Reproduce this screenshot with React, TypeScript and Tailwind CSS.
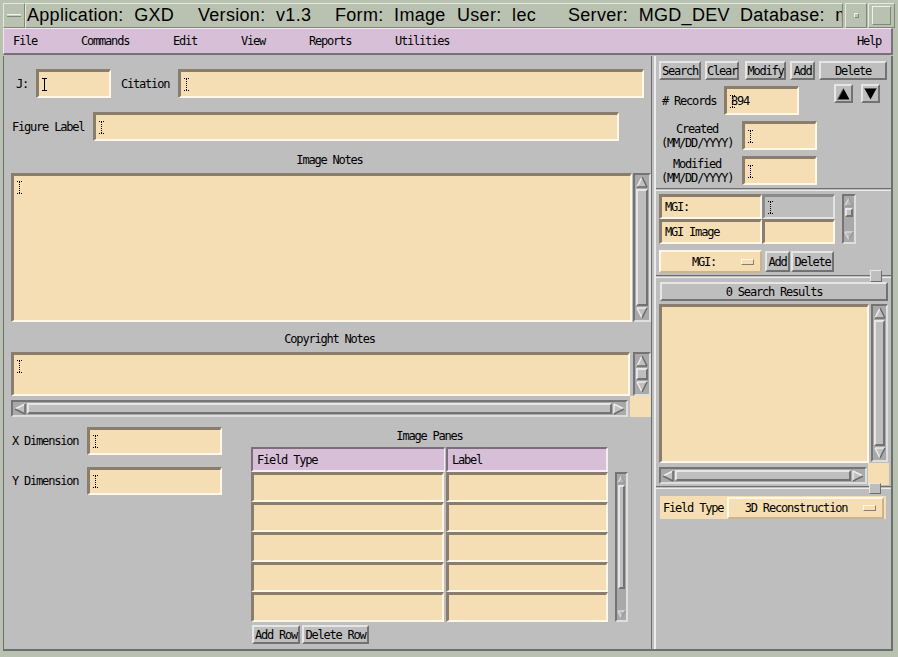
import React from "react";

const mono = "font-['DejaVu_Sans_Mono',monospace] text-[12px] tracking-[-1.2px] leading-[14px] text-black whitespace-pre";
const sunken =
  "bg-[#f5deb3] border-t-[3px] border-l-[3px] border-b-2 border-r-2 border-t-[#8b7d6b] border-l-[#8b7d6b] border-b-[#fff8e9] border-r-[#fff8e9]";
const raised =
  "bg-[#bebebe] border-2 border-t-[#e6e6e6] border-l-[#e6e6e6] border-b-[#727272] border-r-[#727272]";
const trough =
  "bg-[#a9a9a9] border-2 border-t-[#747474] border-l-[#747474] border-b-[#dedede] border-r-[#dedede]";

function IBeam({ solid = false }: { solid?: boolean }) {
  return (
    <svg width="5" height="13" viewBox="0 0 5 13" className="shrink-0">
      <path d="M0 0.5h5M0 12.5h5" stroke="#000" strokeWidth="1" strokeDasharray={solid ? undefined : "1 1"} />
      <path d="M2.5 1v11" stroke="#000" strokeWidth="1" strokeDasharray={solid ? undefined : "1 1"} />
    </svg>
  );
}

function Input({ className = "", cursor = true, solid = false, top = false, children }: {
  className?: string;
  cursor?: boolean;
  solid?: boolean;
  top?: boolean;
  children?: React.ReactNode;
}) {
  return (
    <div className={`${sunken} flex ${top ? "items-start pt-[5px]" : "items-center"} pl-[3px] shrink-0 ${className}`}>
      {cursor && <IBeam solid={solid} />}
      {children}
    </div>
  );
}

function Btn({ className = "", children }: { className?: string; children?: React.ReactNode }) {
  return <div className={`${raised} ${mono} flex items-center justify-center shrink-0 ${className}`}>{children}</div>;
}

// beveled motif arrow
function Tri({ dir, w, h, dim = false }: { dir: "up" | "down" | "left" | "right"; w: number; h: number; dim?: boolean }) {
  const lt = dim ? "#d8d8d8" : "#ececec";
  const dk = dim ? "#9a9a9a" : "#6a6a6a";
  const fill = dim ? "#b4b4b4" : "#c0c0c0";
  let pts: number[][] = [];
  if (dir === "up") pts = [[w / 2, 1], [1, h - 1], [w - 1, h - 1]];
  if (dir === "down") pts = [[1, 1], [w - 1, 1], [w / 2, h - 1]];
  if (dir === "left") pts = [[1, h / 2], [w - 1, 1], [w - 1, h - 1]];
  if (dir === "right") pts = [[1, 1], [w - 1, h / 2], [1, h - 1]];
  const p = pts.map((q) => q.join(",")).join(" ");
  const [a, b, c] = pts;
  const line = (p1: number[], p2: number[], col: string, k: string) => (
    <line key={k} x1={p1[0]} y1={p1[1]} x2={p2[0]} y2={p2[1]} stroke={col} strokeWidth="1.5" />
  );
  let lines: React.ReactNode[] = [];
  if (dir === "up") lines = [line(a, b, lt, "1"), line(b, c, dk, "2"), line(c, a, dk, "3")];
  if (dir === "down") lines = [line(a, b, lt, "1"), line(a, c, lt, "2"), line(b, c, dk, "3")];
  if (dir === "left") lines = [line(a, b, lt, "1"), line(b, c, dk, "2"), line(c, a, dk, "3")];
  if (dir === "right") lines = [line(a, c, lt, "1"), line(a, b, lt, "2"), line(b, c, dk, "3")];
  return (
    <svg width={w} height={h} viewBox={`0 0 ${w} ${h}`} className="shrink-0">
      <polygon points={p} fill={fill} />
      {lines}
    </svg>
  );
}

function VScroll({ className = "", w = 12, thumb = "flex-1", dim = false }: { className?: string; w?: number; thumb?: string; dim?: boolean }) {
  return (
    <div className={`${trough} flex flex-col items-center p-[1px] shrink-0 ${className}`}>
      <Tri dir="up" w={w} h={w} dim={dim} />
      <div className="flex-1 w-full flex flex-col py-[1px]">
        <div className={`${raised} ${thumb}`} />
      </div>
      <Tri dir="down" w={w} h={w} dim={dim} />
    </div>
  );
}

function HScroll({ className = "" }: { className?: string }) {
  return (
    <div className={`${trough} flex items-center p-[1px] shrink-0 ${className}`}>
      <Tri dir="left" w={12} h={12} />
      <div className="flex-1 h-full flex px-[1px]">
        <div className={`${raised} flex-1`} />
      </div>
      <Tri dir="right" w={12} h={12} />
    </div>
  );
}

function Indicator() {
  return <div className="w-[13px] h-[6px] bg-[#f5deb3] border border-t-[#fff8e9] border-l-[#fff8e9] border-b-[#8b7d6b] border-r-[#8b7d6b]" />;
}

function Cell({ className = "", children }: { className?: string; children?: React.ReactNode }) {
  return <div className={`${sunken} ${mono} flex items-center pl-[3px] shrink-0 ${className}`}>{children}</div>;
}

const menus = [
  { name: "File", w: "w-[68px]" },
  { name: "Commands", w: "w-[92px]" },
  { name: "Edit", w: "w-[68px]" },
  { name: "View", w: "w-[68px]" },
  { name: "Reports", w: "w-[86px]" },
  { name: "Utilities", w: "w-[80px]" },
];

export default function App() {
  return (
    <div className="w-[898px] h-[657px] bg-[#b9c1b1] overflow-hidden flex flex-col">
      {/* title bar */}
      <div className="h-[28px] flex items-stretch pt-[3px] pl-[3px] pr-[3px] shrink-0">
        <div className="w-[22px] border border-t-[#e4eadf] border-l-[#e4eadf] border-b-[#7f877a] border-r-[#7f877a] flex items-center justify-center">
          <div className="w-[14px] h-[3px] border-t border-b border-t-[#eef2ea] border-b-[#7f877a] bg-[#c6cdbf]" />
        </div>
        <div className="w-[818px] border border-t-[#e4eadf] border-l-[#e4eadf] border-b-[#7f877a] border-r-[#7f877a] flex items-center overflow-hidden whitespace-pre font-['Liberation_Sans',sans-serif] text-[18px] tracking-[0.3px] text-black">
          <span className="w-[172px] shrink-0 pl-[1px]">Application:  GXD</span>
          <span className="w-[137px] shrink-0">Version:  v1.3</span>
          <span className="w-[122px] shrink-0">Form:  Image</span>
          <span className="w-[111px] shrink-0">User:  lec</span>
          <span className="w-[172px] shrink-0">Server:  MGD_DEV</span>
          <span className="shrink-0">Database:  m</span>
        </div>
        <div className="w-[22px] ml-[2px] border border-t-[#e4eadf] border-l-[#e4eadf] border-b-[#7f877a] border-r-[#7f877a] flex items-center justify-center">
          <div className="w-[5px] h-[5px] border border-t-[#eef2ea] border-l-[#eef2ea] border-b-[#7f877a] border-r-[#7f877a]" />
        </div>
        <div className="w-[27px] ml-[1px] border border-t-[#e4eadf] border-l-[#e4eadf] border-b-[#7f877a] border-r-[#7f877a] flex items-center justify-center">
          <div className="w-[19px] h-[19px] border border-t-[#eef2ea] border-l-[#eef2ea] border-b-[#7f877a] border-r-[#7f877a]" />
        </div>
      </div>

      {/* menu bar */}
      <div className={`ml-[3px] w-[890px] h-[27px] shrink-0 bg-[#d8bfd8] border-t border-l border-t-[#f3e6f3] border-l-[#f3e6f3] border-b-2 border-r-2 border-b-[#7d6e7d] border-r-[#7d6e7d] flex items-center ${mono}`}>
        <div className="ml-[9px] flex">
          {menus.map((m) => (
            <span key={m.name} className={m.w}>
              {m.name}
            </span>
          ))}
        </div>
        <span className="ml-auto mr-[10px]">Help</span>
      </div>

      {/* main */}
      <div className="ml-[3px] w-[890px] h-[595px] mt-[1px] shrink-0 flex bg-[#bebebe] border-b-2 border-b-[#6e6e6e]">
        {/* left panel */}
        <div className="w-[648px] border-l border-l-[#6e6e6e] flex flex-col shrink-0">
          <div className="mt-[13px] h-[29px] flex items-center">
            <span className={`${mono} ml-[12px] w-[20px]`}>J:</span>
            <Input solid className="w-[75px] h-[29px]" />
            <span className={`${mono} ml-[10px] w-[57px]`}>Citation</span>
            <Input className="w-[466px] h-[29px]" />
          </div>
          <div className="mt-[14px] h-[29px] flex items-center">
            <span className={`${mono} ml-[8px] w-[81px]`}>Figure Label</span>
            <Input className="w-[526px] h-[29px]" />
          </div>
          <div className={`${mono} mt-[9px] h-[20px] flex items-center justify-center pl-[4px]`}>Image Notes</div>
          <div className="mt-[3px] h-[149px] flex">
            <Input top className="ml-[7px] w-[621px] h-[149px]" />
            <VScroll className="ml-[1px] w-[18px] h-[149px]" w={12} />
          </div>
          <div className={`${mono} mt-[7px] h-[20px] flex items-center justify-center pl-[4px]`}>Copyright Notes</div>
          <div className="mt-[3px] h-[44px] flex">
            <Input top className="ml-[7px] w-[619px] h-[44px]" />
            <VScroll className="ml-[3px] w-[18px] h-[44px]" w={12} />
          </div>
          <div className="h-[21px] flex items-end">
            <HScroll className="ml-[7px] w-[617px] h-[17px]" />
            <div className="ml-[2px] w-[21px] h-[21px] bg-[#f5deb3]" />
          </div>

          {/* bottom area */}
          <div className="flex">
            <div className="w-[247px] shrink-0 flex flex-col">
              <div className="mt-[10px] h-[28px] flex items-center">
                <span className={`${mono} ml-[8px] w-[75px]`}>X Dimension</span>
                <Input className="w-[135px] h-[28px]" />
              </div>
              <div className="mt-[12px] h-[28px] flex items-center">
                <span className={`${mono} ml-[8px] w-[75px]`}>Y Dimension</span>
                <Input className="w-[135px] h-[28px]" />
              </div>
            </div>
            <div className="flex flex-col">
              <div className={`${mono} mt-[9px] h-[20px] w-[357px] flex items-center justify-center`}>Image Panes</div>
              <div className="mt-[1px] h-[25px] flex gap-[1px]">
                <div className={`w-[194px] h-[25px] bg-[#d8bfd8] border-t-2 border-l-2 border-b-2 border-r border-t-[#7d6e7d] border-l-[#7d6e7d] border-b-[#f6ecf6] border-r-[#f6ecf6] flex items-center pl-[4px] ${mono}`}>Field Type</div>
                <div className={`w-[162px] h-[25px] bg-[#d8bfd8] border-t-2 border-l-2 border-b-2 border-r-2 border-t-[#7d6e7d] border-l-[#7d6e7d] border-b-[#f6ecf6] border-r-[#f6ecf6] flex items-center pl-[4px] ${mono}`}>Label</div>
              </div>
              <div className="flex">
                <div className="flex flex-col w-[357px]">
                  {[0, 1, 2, 3, 4].map((r) => (
                    <div key={r} className="h-[30px] flex gap-[2px]">
                      <Cell className="w-[193px] h-[30px]" />
                      <Cell className="w-[162px] h-[30px]" />
                    </div>
                  ))}
                </div>
                <VScroll className="ml-[7px] w-[13px] h-[150px]" w={9} dim thumb="h-[104px]" />
              </div>
              <div className="mt-[3px] flex">
                <Btn className="ml-[1px] w-[48px] h-[19px]">Add Row</Btn>
                <Btn className="ml-[2px] w-[67px] h-[19px]">Delete Row</Btn>
              </div>
            </div>
          </div>
        </div>

        {/* sash */}
        <div className="w-[4px] shrink-0 border-l border-r border-l-[#6e6e6e] border-r-[#ececec]" />

        {/* right panel */}
        <div className="w-[238px] shrink-0 flex flex-col border-r-2 border-r-[#6e6e6e] border-l border-l-[#ececec]">
          <div className="mt-[5px] h-[19px] flex pl-[3px]">
            <Btn className="w-[42px] h-[19px]">Search</Btn>
            <Btn className="ml-[4px] w-[34px] h-[19px]">Clear</Btn>
            <Btn className="ml-[6px] w-[41px] h-[19px]">Modify</Btn>
            <Btn className="ml-[4px] w-[25px] h-[19px]">Add</Btn>
            <Btn className="ml-[4px] w-[68px] h-[19px]">Delete</Btn>
          </div>
          <div className="mt-[4px] flex">
            <div className="flex flex-col">
              <div className="mt-[2px] h-[29px] flex items-center">
                <span className={`${mono} ml-[6px] w-[62px]`}># Records</span>
                <Input className="w-[75px] h-[29px]">
                  <span className={`${mono} -ml-[4px]`}>894</span>
                </Input>
              </div>
              <div className="mt-[6px] h-[29px] flex items-center">
                <span className={`${mono} ml-[5px] w-[72px] text-center leading-[12px]`}>
                  {"Created\n(MM/DD/YYYY)"}
                </span>
                <Input className="ml-[9px] w-[75px] h-[29px]" />
              </div>
              <div className="mt-[6px] h-[29px] flex items-center">
                <span className={`${mono} ml-[5px] w-[72px] text-center leading-[12px]`}>
                  {"Modified\n(MM/DD/YYYY)"}
                </span>
                <Input className="ml-[9px] w-[75px] h-[29px]" />
              </div>
            </div>
            <div className="ml-[17px] flex gap-[8px] items-start">
              <div className={`${raised} w-[19px] h-[19px] flex items-center justify-center`}>
                <svg width="13" height="12" viewBox="0 0 13 12">
                  <polygon points="6.5,0.5 0.5,11.5 12.5,11.5" fill="#000" />
                  <line x1="6.5" y1="0.5" x2="0.5" y2="11.5" stroke="#555" />
                </svg>
              </div>
              <div className={`${raised} w-[19px] h-[19px] flex items-center justify-center`}>
                <svg width="13" height="12" viewBox="0 0 13 12">
                  <polygon points="0.5,0.5 12.5,0.5 6.5,11.5" fill="#000" />
                  <line x1="0.5" y1="0.5" x2="12.5" y2="0.5" stroke="#555" />
                </svg>
              </div>
            </div>
          </div>

          <div className="mt-[3px] h-[3px] border-t border-b border-t-[#6e6e6e] border-b-[#ececec]" />

          {/* MGI accession table */}
          <div className="mt-[3px] flex pl-[3px]">
            <div className="flex flex-col">
              <div className="flex h-[25px]">
                <Cell className="w-[103px] h-[25px]">MGI:</Cell>
                <div className="w-[73px] h-[25px] bg-[#bebebe] border-t-[3px] border-l-[3px] border-b-2 border-r-2 border-t-[#8b8b8b] border-l-[#8b8b8b] border-b-[#e2e2e2] border-r-[#e2e2e2] flex items-center pl-[3px]">
                  <IBeam />
                </div>
              </div>
              <div className="flex h-[25px]">
                <Cell className="w-[103px] h-[25px]">MGI Image</Cell>
                <Cell className="w-[73px] h-[25px]" />
              </div>
            </div>
            <VScroll className="ml-[7px] w-[14px] h-[50px]" w={10} dim thumb="h-[9px]" />
          </div>
          <div className="mt-[6px] h-[23px] flex items-center pl-[3px]">
            <div className={`w-[103px] h-[23px] bg-[#f5deb3] border-2 border-t-[#fff8e9] border-l-[#fff8e9] border-b-[#c9b48d] border-r-[#c9b48d] flex items-center ${mono}`}>
              <span className="flex-1 text-center pl-[6px]">MGI:</span>
              <span className="mr-[6px]">
                <Indicator />
              </span>
            </div>
            <Btn className="ml-[3px] w-[25px] h-[21px]">Add</Btn>
            <Btn className="ml-[1px] w-[43px] h-[21px]">Delete</Btn>
          </div>

          <div className="relative mt-[2px] h-[3px] border-t border-b border-t-[#6e6e6e] border-b-[#ececec]">
            <div className="absolute right-[9px] -top-[6px] w-[12px] h-[12px] bg-[#bebebe] border border-t-[#e6e6e6] border-l-[#e6e6e6] border-b-[#6e6e6e] border-r-[#6e6e6e]" />
          </div>

          <Btn className="mt-[4px] ml-[4px] w-[228px] h-[19px]">0 Search Results</Btn>

          <div className="mt-[3px] flex pl-[3px]">
            <div className={`${sunken} w-[210px] h-[159px] shrink-0`} />
            <VScroll className="ml-[2px] w-[17px] h-[158px]" w={12} />
          </div>
          <div className="flex pl-[3px] items-start">
            <HScroll className="mt-[4px] w-[208px] h-[17px]" />
            <div className="ml-[1px] w-[21px] h-[22px] bg-[#f5deb3]" />
          </div>

          <div className="relative mt-[1px] h-[3px] border-t border-b border-t-[#6e6e6e] border-b-[#ececec]">
            <div className="absolute right-[10px] -top-[4px] w-[12px] h-[11px] bg-[#bebebe] border border-t-[#e6e6e6] border-l-[#e6e6e6] border-b-[#6e6e6e] border-r-[#6e6e6e]" />
          </div>

          <div className={`mt-[7px] ml-[4px] w-[226px] h-[23px] bg-[#f5deb3] flex items-center ${mono}`}>
            <span className="ml-[3px] w-[64px]">Field Type</span>
            <div className="w-[157px] h-[22px] border-2 border-t-[#fff8e9] border-l-[#fff8e9] border-b-[#c9b48d] border-r-[#c9b48d] flex items-center">
              <span className="flex-1 text-center">3D Reconstruction</span>
              <span className="mr-[6px]">
                <Indicator />
              </span>
            </div>
          </div>
        </div>
      </div>
    </div>
  );
}
